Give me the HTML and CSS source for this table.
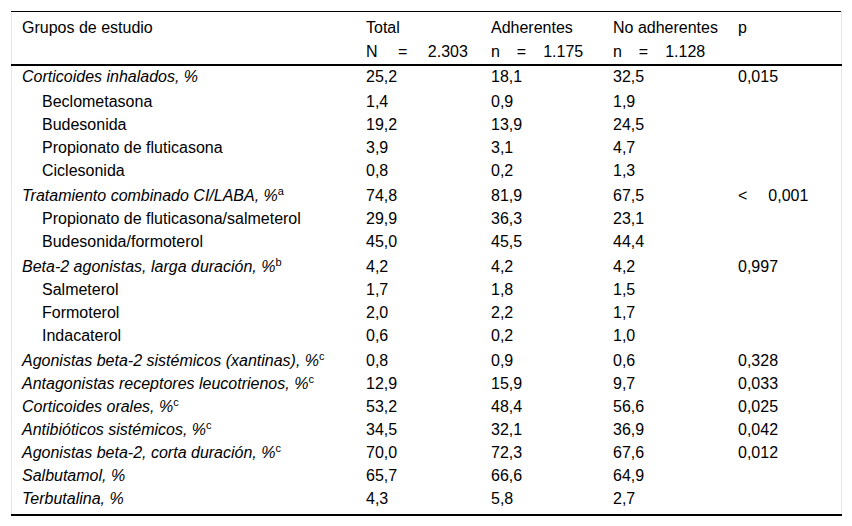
FILE: index.html
```html
<!DOCTYPE html>
<html>
<head>
<meta charset="utf-8">
<link rel="stylesheet" href="styles.css">
</head>
<body>
<div class="wrap">
<table class="t">
<thead>
<tr>
<th class="c1">Grupos de estudio</th>
<th class="c2">Total<br><span class="ws-n">N = 2.303</span></th>
<th class="c3">Adherentes<br><span class="ws-a">n = 1.175</span></th>
<th class="c4">No adherentes<br><span class="ws-a">n = 1.128</span></th>
<th class="c5">p</th>
</tr>
</thead>
<tbody>
<tr class="first"><td><i>Corticoides inhalados, %</i></td><td>25,2</td><td>18,1</td><td>32,5</td><td>0,015</td></tr>
<tr><td class="ind">Beclometasona</td><td>1,4</td><td>0,9</td><td>1,9</td><td></td></tr>
<tr><td class="ind">Budesonida</td><td>19,2</td><td>13,9</td><td>24,5</td><td></td></tr>
<tr><td class="ind">Propionato de fluticasona</td><td>3,9</td><td>3,1</td><td>4,7</td><td></td></tr>
<tr><td class="ind">Ciclesonida</td><td>0,8</td><td>0,2</td><td>1,3</td><td></td></tr>
<tr class="g"><td><i>Tratamiento combinado CI/LABA, %</i><sup>a</sup></td><td>74,8</td><td>81,9</td><td>67,5</td><td><span class="ws-p">&lt; 0,001</span></td></tr>
<tr><td class="ind">Propionato de fluticasona/salmeterol</td><td>29,9</td><td>36,3</td><td>23,1</td><td></td></tr>
<tr><td class="ind">Budesonida/formoterol</td><td>45,0</td><td>45,5</td><td>44,4</td><td></td></tr>
<tr class="g"><td><i>Beta-2 agonistas, larga duración, %</i><sup>b</sup></td><td>4,2</td><td>4,2</td><td>4,2</td><td>0,997</td></tr>
<tr><td class="ind">Salmeterol</td><td>1,7</td><td>1,8</td><td>1,5</td><td></td></tr>
<tr><td class="ind">Formoterol</td><td>2,0</td><td>2,2</td><td>1,7</td><td></td></tr>
<tr><td class="ind">Indacaterol</td><td>0,6</td><td>0,2</td><td>1,0</td><td></td></tr>
<tr class="g"><td><i>Agonistas beta-2 sistémicos (xantinas), %</i><sup>c</sup></td><td>0,8</td><td>0,9</td><td>0,6</td><td>0,328</td></tr>
<tr><td><i>Antagonistas receptores leucotrienos, %</i><sup>c</sup></td><td>12,9</td><td>15,9</td><td>9,7</td><td>0,033</td></tr>
<tr><td><i>Corticoides orales, %</i><sup>c</sup></td><td>53,2</td><td>48,4</td><td>56,6</td><td>0,025</td></tr>
<tr><td><i>Antibióticos sistémicos, %</i><sup>c</sup></td><td>34,5</td><td>32,1</td><td>36,9</td><td>0,042</td></tr>
<tr><td><i>Agonistas beta-2, corta duración, %</i><sup>c</sup></td><td>70,0</td><td>72,3</td><td>67,6</td><td>0,012</td></tr>
<tr><td><i>Salbutamol, %</i></td><td>65,7</td><td>66,6</td><td>64,9</td><td></td></tr>
<tr class="last"><td><i>Terbutalina, %</i></td><td>4,3</td><td>5,8</td><td>2,7</td><td></td></tr>
</tbody>
</table>
</div>
</body>
</html>
```

FILE: styles.css
```css
html, body {
  margin: 0;
  padding: 0;
  background: #fff;
}
body {
  font-family: "Liberation Sans", Arial, sans-serif;
  font-size: 16px;
  color: #000;
}
.wrap {
  padding: 11px 10px 0 11px;
}
.t {
  width: 831px;
  border-collapse: collapse;
  border-left: 1px solid #e6e6e6;
  border-right: 1px solid #e6e6e6;
  border-top: 1px solid #000;
  border-bottom: 2px solid #000;
  table-layout: fixed;
}
.t th {
  font-weight: normal;
  text-align: left;
  vertical-align: top;
  line-height: 24px;
  padding: 4px 0 0 10px;
  border-bottom: 2px solid #000;
}
.c1 { width: 334px; }
.c2 { width: 115px; }
.c3 { width: 112px; }
.c4 { width: 115px; }
.t td {
  padding: 0 0 2px 10px;
  line-height: 21px;
  vertical-align: top;
  white-space: nowrap;
}
.t td.ind { padding-left: 30px; }
.t tr.first td { padding-bottom: 4px; }
.t tr.g td { padding-top: 2px; }
.t tr.last td { padding-bottom: 5px; }
sup {
  font-size: 11px;
  line-height: 0;
  vertical-align: 6px;
}
.ws-n { word-spacing: 16px; }
.ws-a { word-spacing: 12.5px; }
.ws-p { word-spacing: 16.5px; }
```
